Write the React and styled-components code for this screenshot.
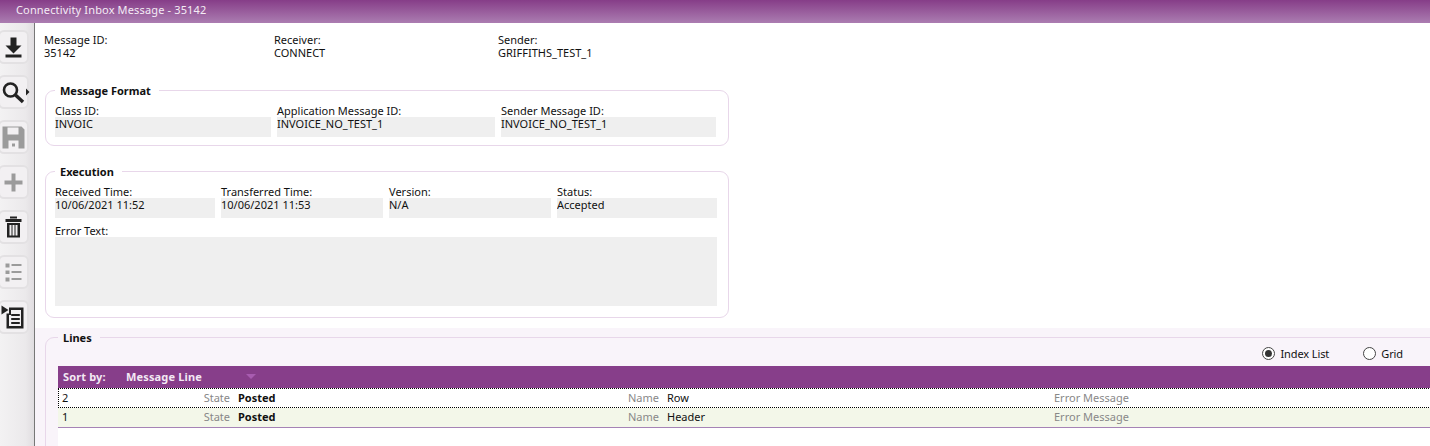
import React from "react";
import styled, { createGlobalStyle } from "styled-components";

const Global = createGlobalStyle`
  html, body { margin: 0; padding: 0; height: 446px; overflow: hidden; background: #fff; }
  body { font-family: "Noto Sans", "DejaVu Sans", sans-serif; font-size: 11px; line-height: 13px; color: #111; }
  #root { width: 1430px; height: 446px; }
`;

const Page = styled.div`
  width: 1430px; height: 446px; display: flex; flex-direction: column; overflow: hidden;
`;
const TitleBar = styled.div`
  height: 23px; flex: none; padding-left: 16px; display: flex; align-items: center;
  background: linear-gradient(#863d88, #ab7db1);
  color: #f4ecf5; font-size: 11px; letter-spacing: 0.15px; padding-bottom: 5px; box-sizing: border-box;
`;
const Body = styled.div`flex: 1; display: flex; min-height: 0;`;
const Sidebar = styled.div`
  width: 34px; flex: none; box-sizing: content-box; border-right: 1px solid #777;
  background: linear-gradient(90deg, #f3f2f3, #ebe9eb 75%, #e0dde0);
  display: flex; flex-direction: column; gap: 11px; padding-top: 7px; overflow: hidden;
`;
const ToolButton = styled.div`
  width: 31px; height: 34px; box-sizing: border-box; margin-left: -2px; flex: none;
  border: 2px solid #e3e1e3; border-radius: 6px; background: #f2f0f2;
  display: flex; align-items: center; justify-content: center;
  color: ${p => (p.$off ? "#9b9b9b" : "#222")};
  svg { overflow: visible; }
`;
const Main = styled.div`flex: 1; min-width: 0; display: flex; flex-direction: column;`;
const Upper = styled.div`height: 305px; flex: none; padding: 10px 0 0 10px; box-sizing: border-box;`;
const InfoRow = styled.div`display: grid; grid-template-columns: 230px 224px 200px; margin-left: -1px; height: 26px;`;
const Info = styled.div`line-height: 13px;`;
const Panel = styled.fieldset`
  margin: ${p => p.$top}px 0 0 0; padding: 0 0 0 9px; width: 684px; height: ${p => p.$h}px;
  box-sizing: border-box; border: 1px solid #e8d7ea; border-radius: 9px; min-width: 0;
`;
const Legend = styled.legend`
  margin-left: 0; padding: 0 8px 0 5px; font-weight: 700; font-size: 11px; line-height: 13px; color: #111;
`;
const FieldRow = styled.div`display: flex; gap: ${p => p.$gap}px; margin-top: ${p => p.$mt}px;`;
const Field = styled.div`width: ${p => p.$w}px; flex: none;`;
const Label = styled.div`height: 13px; line-height: 13px; white-space: nowrap;`;
const Value = styled.div`
  background: #efefef; height: ${p => p.$h || 20}px; line-height: 13px; white-space: nowrap; overflow: hidden;
`;
const Lines = styled.div`
  flex: 1; min-height: 0; background: #f9f4fa; padding: 3px 0 0 10px; overflow: hidden;
`;
const LinesPanel = styled.fieldset`
  margin: 0 -40px 0 0; padding: 0 0 0 12px; height: 140px; box-sizing: border-box; border: 1px solid #e8d7ea; border-radius: 9px;
  min-width: 0;
`;
const RadioRow = styled.div`
  height: 22px; display: flex; justify-content: flex-end; align-items: center; padding-right: 66px; padding-bottom: 4px; box-sizing: border-box;
`;
const RadioItem = styled.label`
  display: flex; align-items: center; gap: 5px; margin-left: ${p => p.$ml}px; color: #111; letter-spacing: -0.1px;
`;
const RadioDot = styled.span`
  width: 13px; height: 13px; border-radius: 50%; border: 1px solid #444; background: #fff; box-sizing: border-box;
  display: flex; align-items: center; justify-content: center;
  &::after { content: ""; width: 7px; height: 7px; border-radius: 50%; background: ${p => (p.$on ? "#333" : "transparent")}; }
`;
const GridHead = styled.div`
  height: 22px; background: #873e8a; color: #f3e9f4; font-weight: 700; display: flex; align-items: center;
  padding-left: 5px; padding-bottom: 1px; box-sizing: border-box; white-space: nowrap; letter-spacing: 0.15px;
`;
const SortBy = styled.span`width: 63px; flex: none;`;
const SortName = styled.span`width: 120px; flex: none;`;
const Caret = styled.span`
  width: 0; height: 0; border-left: 5px solid transparent; border-right: 5px solid transparent; border-top: 5px solid #a85cb0;
`;
const Count = styled.span`margin-left: 1179px;`;
const Row = styled.div`
  height: 20px; box-sizing: border-box; display: grid; align-items: center; padding-bottom: 2px;
  grid-template-columns: 130px 38px 391px 38px 395px 200px;
  background: ${p => (p.$alt ? "#f3f7e9" : "#fff")};
  ${p => p.$focus
    ? "border-top: 1px dotted #000; border-bottom: 1px dotted #000; border-left: 1px dotted #000; padding-left: 3px;"
    : "border-bottom: 1px solid #a583b6; padding-left: 4px;"}
`;
const Num = styled.span``;
const Key = styled.span`color: #888; text-align: right;`;
const Strong = styled.span`font-weight: 700; padding-left: 8px;`;
const Plain = styled.span`padding-left: 8px;`;
const Faint = styled.span`color: #888;`;
const Blank = styled.div`height: 18px; background: #fff;`;

const I = ({ children }) => (
  <svg width={24} height={24} viewBox="0 0 24 24" fill="currentColor">{children}</svg>
);

export default function App() {
  return (
    <Page>
      <Global />
      <TitleBar>Connectivity Inbox Message - 35142</TitleBar>
      <Body>
        <Sidebar>
          <ToolButton>
            <I><path d="M8.500 2.500h6v8h5l-8 8-8-8h5z" /><rect x="3.500" y="19.500" width="16" height="3" /></I>
          </ToolButton>
          <ToolButton>
            <I>
              <circle cx="8.500" cy="10" r="6.500" fill="none" stroke="currentColor" strokeWidth="2.600" />
              <path d="M13.500 15l7.500 7" stroke="currentColor" strokeWidth="3.400" />
              <path d="M24 8.500l3.500 3.500-3.500 3.500z" />
            </I>
          </ToolButton>
          <ToolButton $off>
            <I>
              <path fillRule="evenodd" d="M.5 1.500h19l3 3v19H.5zM5.500 2.500v7h11v-7zM6.500 15.500v8h10v-8z" />
              <rect x="10" y="18.500" width="3" height="3" />
            </I>
          </ToolButton>
          <ToolButton $off>
            <I><path d="M9.500 3.500h4v7h7v4h-7v7h-4v-7h-7v-4h7z" /></I>
          </ToolButton>
          <ToolButton>
            <I>
              <rect x="8" y="1.500" width="7" height="2" />
              <rect x="3.500" y="4" width="16" height="3" />
              <path fillRule="evenodd" d="M5 8h13v14.500H5zM7.500 10v10.500h2V10zM10.500 10v10.500h2V10zM13.500 10v10.500h2V10z" />
            </I>
          </ToolButton>
          <ToolButton $off>
            <I>
              <rect x="3.500" y="3.500" width="4" height="4" /><rect x="9.500" y="4" width="10" height="2" />
              <rect x="3.500" y="10.500" width="4" height="3.500" /><rect x="9.500" y="11" width="10" height="2" />
              <rect x="3.500" y="17.500" width="4" height="4" /><rect x="9.500" y="18" width="10" height="2" />
            </I>
          </ToolButton>
          <ToolButton>
            <svg width="28" height="26" viewBox="0 0 28 26" fill="currentColor" style={{ flex: "none", marginLeft: "-4px" }}>
              <path d="M3.500 1.500l7 4.500-7 4.500z" />
              <path fillRule="evenodd" d="M11 3.500h14.500v21h-17v-15h2.500zM13 6v5h-2v11h12V6zM13.200 10h8.600v2h-8.600zM13.200 14h8.600v2h-8.600zM13.200 18h8.600v2h-8.600z" />
            </svg>
          </ToolButton>
        </Sidebar>
        <Main>
          <Upper>
            <InfoRow>
              <Info>Message ID:<br />35142</Info>
              <Info>Receiver:<br />CONNECT</Info>
              <Info>Sender:<br />GRIFFITHS_TEST_1</Info>
            </InfoRow>
            <Panel $top={25} $h={62}>
              <Legend>Message Format</Legend>
              <FieldRow $gap={6} $mt={7}>
                <Field $w={216}><Label>Class ID:</Label><Value>INVOIC</Value></Field>
                <Field $w={218}><Label>Application Message ID:</Label><Value>INVOICE_NO_TEST_1</Value></Field>
                <Field $w={215}><Label>Sender Message ID:</Label><Value>INVOICE_NO_TEST_1</Value></Field>
              </FieldRow>
            </Panel>
            <Panel $top={19} $h={153}>
              <Legend>Execution</Legend>
              <FieldRow $gap={6} $mt={7}>
                <Field $w={160}><Label>Received Time:</Label><Value>10/06/2021 11:52</Value></Field>
                <Field $w={162}><Label>Transferred Time:</Label><Value>10/06/2021 11:53</Value></Field>
                <Field $w={162}><Label>Version:</Label><Value>N/A</Value></Field>
                <Field $w={160}><Label>Status:</Label><Value>Accepted</Value></Field>
              </FieldRow>
              <FieldRow $gap={0} $mt={6}>
                <Field $w={662}><Label>Error Text:</Label><Value $h={69} /></Field>
              </FieldRow>
            </Panel>
          </Upper>
          <Lines>
            <LinesPanel>
              <Legend>Lines</Legend>
              <RadioRow>
                <RadioItem $ml={0}><RadioDot $on />Index List</RadioItem>
                <RadioItem $ml={34}><RadioDot />Grid</RadioItem>
              </RadioRow>
              <GridHead>
                <SortBy>Sort by:</SortBy>
                <SortName>Message Line</SortName>
                <Caret />
                <Count>25</Count>
              </GridHead>
              <Row $focus>
                <Num>2</Num><Key>State</Key><Strong>Posted</Strong><Key>Name</Key><Plain>Row</Plain><Faint>Error Message</Faint>
              </Row>
              <Row $alt>
                <Num>1</Num><Key>State</Key><Strong>Posted</Strong><Key>Name</Key><Plain>Header</Plain><Faint>Error Message</Faint>
              </Row>
              <Blank />
            </LinesPanel>
          </Lines>
        </Main>
      </Body>
    </Page>
  );
}
